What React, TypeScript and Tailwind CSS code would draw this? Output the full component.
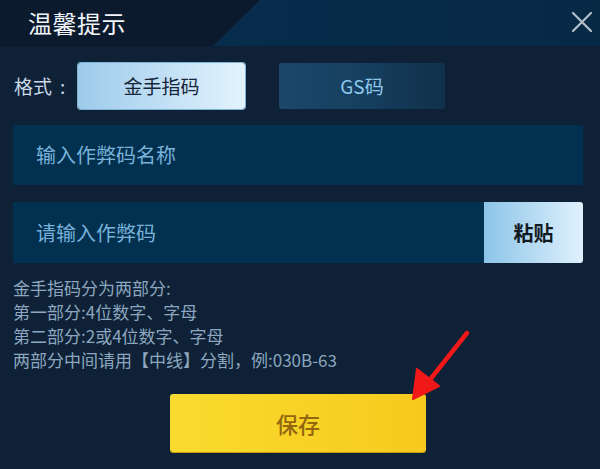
import React from 'react';

const FONT = '"Noto Sans CJK SC", "Noto Sans", sans-serif';

function CloseIcon() {
  return (
    <svg width="22" height="22" viewBox="0 0 22 22" fill="none">
      <path d="M2 2L20 20M20 2L2 20" stroke="#b3bfcb" strokeWidth="2.2" strokeLinecap="round" />
    </svg>
  );
}

function Arrow() {
  return (
    <svg
      className="absolute left-0 top-0 pointer-events-none"
      width="600"
      height="469"
      viewBox="0 0 600 469"
    >
      <path d="M467 333L425 386" stroke="#f01818" strokeWidth="4.5" strokeLinecap="round" />
      <path d="M413 399L417 369L439 386Z" fill="#f01818" stroke="#f01818" strokeWidth="2" strokeLinejoin="round" />
    </svg>
  );
}

export default function App() {
  return (
    <div
      className="relative w-[600px] h-[469px] overflow-hidden bg-[#0e2137]"
      style={{ fontFamily: FONT }}
    >
      {/* header */}
      <div className="relative h-[47px] bg-[#0c1a2d] flex items-center px-[28px] border-b border-[#0b1e33]">
        <div className="absolute inset-0 bg-gradient-to-r from-[#0a3050] via-[#072c4b] to-[#062946] [clip-path:polygon(260px_0,100%_0,100%_100%,213px_100%)]" />
        <h1 className="relative text-[24px] leading-none text-[#f2f6fa] tracking-[0.5px]">温馨提示</h1>
        <button className="absolute right-[7px] top-[11px]" aria-label="关闭">
          <CloseIcon />
        </button>
      </div>

      <div className="px-[13px] pt-[16px]">
        {/* format row */}
        <div className="flex items-center h-[46px]">
          <span className="w-[65px] pl-[1px] text-[19px] text-[#c9d9e7] whitespace-nowrap">
            格式<span className="ml-[8px]">:</span>
          </span>
          <button className="w-[167px] h-[46px] rounded-[3px] bg-gradient-to-r from-[#9dcbeb] to-[#e3f3fd] text-[19px] text-[#16263a] shadow-[0_0_0_1px_#7fb3d6]">
            金手指码
          </button>
          <button className="ml-[34px] w-[166px] h-[46px] rounded-[3px] bg-gradient-to-r from-[#1c4769] via-[#163f5f] to-[#10304b] text-[19px] text-[#8ec9ec]">
            GS码
          </button>
        </div>

        {/* name input */}
        <div className="mt-[16px] h-[60px] w-[570px] bg-[#02304f] flex items-center px-[23px]">
          <span className="text-[20px] text-[#78b2da]">输入作弊码名称</span>
        </div>

        {/* code input */}
        <div className="mt-[17px] h-[61px] w-[570px] flex">
          <div className="flex-1 bg-[#02304f] flex items-center px-[23px]">
            <span className="text-[20px] text-[#78b2da]">请输入作弊码</span>
          </div>
          <button className="w-[99px] h-full rounded-r-[3px] bg-gradient-to-r from-[#8cc4e8] to-[#e0f1fc] text-[20px] font-bold text-[#101820]">
            粘贴
          </button>
        </div>

        {/* help text */}
        <div className="mt-[13px] text-[17px] leading-[24px] text-[#8ca7bf]">
          <p>金手指码分为两部分:</p>
          <p>第一部分:4位数字、字母</p>
          <p>第二部分:2或4位数字、字母</p>
          <p>两部分中间请用【中线】分割，例:030B-63</p>
        </div>

        {/* save */}
        <button className="mt-[22px] ml-[157px] w-[256px] h-[58px] rounded-[3px] bg-gradient-to-r from-[#fadb2f] to-[#f6ca1c] text-[22px] font-medium text-[#93670e] shadow-[0_1px_0_#c79a10]">
          保存
        </button>
      </div>

      <Arrow />
    </div>
  );
}
